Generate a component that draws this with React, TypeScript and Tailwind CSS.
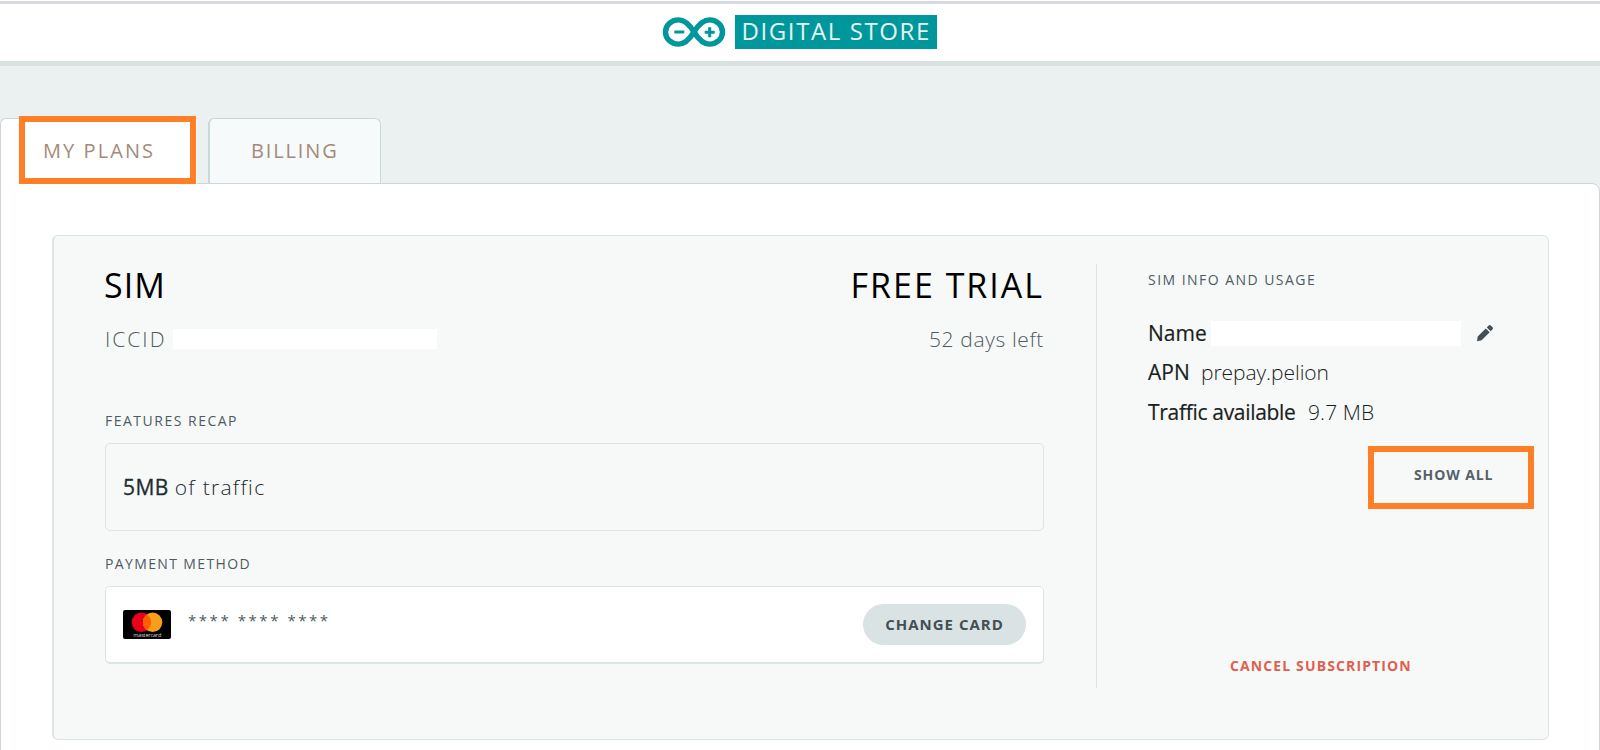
import type { ReactNode } from 'react';

function Logo() {
  return (
    <svg width="64" height="32" viewBox="0 0 64 32" className="shrink-0">
      <g fill="none" stroke="#00979c">
        <path
          strokeWidth="5.400"
          d="M32 16C28 9.500 23.500 3.900 16.500 3.900C9 3.900 3.500 9.300 3.500 16S9 28.100 16.500 28.100C23.500 28.100 28 22.500 32 16C36 9.500 40.500 3.900 47.500 3.900C55 3.900 60.500 9.300 60.500 16S55 28.100 47.500 28.100C40.500 28.100 36 22.500 32 16Z"
        />
        <path strokeWidth="3" d="M12.300 16H22.300M42.700 16.300H52.700M47.700 11.300V21.300" />
      </g>
    </svg>
  );
}

function Mastercard() {
  return (
    <svg width="48" height="29" viewBox="0 0 48 29" className="shrink-0">
      <rect width="48" height="29" rx="2" fill="#000" />
      <circle cx="18.400" cy="12.300" r="9.700" fill="#eb001b" />
      <circle cx="29.600" cy="12.300" r="9.700" fill="#f79e1b" />
      <path d="M24 4.400a9.700 9.700 0 0 1 0 15.800a9.700 9.700 0 0 1 0-15.800Z" fill="#ff5f00" />
      <text x="24.300" y="26.900" textAnchor="middle" fontSize="5.500" textLength="28" fill="#d5d5d5" fontFamily="Open Sans, sans-serif">
        mastercard
      </text>
    </svg>
  );
}

function Pencil() {
  return (
    <svg width="18" height="18" viewBox="0 0 18 18" className="mt-[-2px] ml-[15px] shrink-0">
      <path
        fill="#434f54"
        d="M1 17.200L1.700 12.600L9.800 4.400L13.700 8.300L5.600 16.300ZM10.800 3.400L12.700 1.400Q13.700 0.500 14.800 1.500L16.600 3.300Q17.500 4.300 16.600 5.300L14.700 7.300Z"
      />
    </svg>
  );
}

function Label({ children }: { children: ReactNode }) {
  return <h3 className="h-5 text-[14px] leading-5 text-[#4e5b61]">{children}</h3>;
}

export default function App() {
  return (
    <div className="flex h-[750px] w-[1600px] flex-col overflow-hidden bg-[#ebf1f1] font-['Open_Sans',sans-serif] whitespace-nowrap">
      <header className="h-[66px] shrink-0 border-b-[5px] border-[#d9e1df] bg-white pt-px">
        <div className="flex h-[60px] w-full justify-center border-t-[3px] border-[#d8dae2] pt-[11px] pr-[2px]">
          <div className="flex pt-[1px]">
            <Logo />
          </div>
          <div className="ml-[9px] h-[34px] w-[202px] bg-[#00979c] pl-[7px] text-[24px] leading-[31px] tracking-[1.600px] text-[#e4f4f4]">
            DIGITAL STORE
          </div>
        </div>
      </header>

      <nav className="flex h-[118px] shrink-0 items-end">
        <div className="z-10 h-[66px] w-[197px] shrink-0 rounded-tl-md border-t border-l border-[#ccd7d7] bg-white pl-[18px]">
          <div className="-mt-[3px] h-[68px] w-[177px] border-[6px] border-[#ff7f27] bg-white pl-[18px] text-[20px] leading-[57px] tracking-[2.080px] text-[#a6897b]">
            MY PLANS
          </div>
        </div>
        <div className="ml-[11px] h-[66px] w-[173px] rounded-t-md border border-b-0 border-l-2 border-[#ccd7d7] bg-[#f7fafa] pl-[41px] text-[20px] leading-[63px] tracking-[1.850px] text-[#a6897b]">
          BILLING
        </div>
      </nav>

      <main className="-mt-px h-[580px] shrink-0 rounded-tr-lg border border-[#ccd7d7] bg-white pt-[51px] pl-[51px]">
        <section className="flex h-[505px] w-[1497px] rounded-md border border-l-2 border-[#dbe5e4] bg-[#f7f9f9]">
          <div className="w-[1042px] shrink-0 pt-[29px] pl-[51px]">
            <div className="flex h-10 w-[939px] justify-between text-[34px] leading-10 text-black">
              <h1 className="-ml-px tracking-[1.100px]">SIM</h1>
              <h2 className="tracking-[1.980px]">FREE TRIAL</h2>
            </div>
            <div className="mt-[18px] flex h-8 w-[939px] items-center justify-between text-[21px] leading-8 font-light text-[#4e5b61]">
              <div className="flex items-center">
                <span className="w-[68px] tracking-[2.000px]">ICCID</span>
                <span className="-mt-px h-5 w-[264px] bg-white" />
              </div>
              <span className="tracking-[0.620px]">52 days left</span>
            </div>
            <div className="mt-[56px] tracking-[1.500px]">
              <Label>FEATURES RECAP</Label>
            </div>
            <div className="mt-[12px] h-[88px] w-[939px] rounded-[5px] border border-[#dbe5e4] pl-[17px] text-[21px] leading-[86px] text-[#222b2e]">
              <span className="tracking-[0.400px] [-webkit-text-stroke:0.300px]">5MB</span>
              <span className="ml-[6px] font-light tracking-[1.300px]">of traffic</span>
            </div>
            <div className="mt-[23px] tracking-[1.370px]">
              <Label>PAYMENT METHOD</Label>
            </div>
            <div className="mt-[12px] flex h-[78px] w-[939px] items-center rounded-[5px] border border-b-2 border-[#dbe5e4] bg-white pl-[17px]">
              <Mastercard />
              <span className="mt-[-10px] ml-[17px] text-[15px] leading-6 tracking-[2.550px] text-[#4e5b61]">**** **** ****</span>
              <button className="mr-[17px] ml-auto h-[41px] w-[163px] rounded-full bg-[#dae3e3] pb-px text-[15px] font-bold tracking-[1.000px] text-[#434f54]">
                CHANGE CARD
              </button>
            </div>
          </div>

          <aside className="mt-[28px] h-[424px] w-[452px] border-l border-[#dbe5e4] pl-[51px]">
            <div className="mt-[6px] tracking-[1.460px]">
              <Label>SIM INFO AND USAGE</Label>
            </div>
            <dl className="mt-[24px] text-[21px] leading-[39px] text-[#1a1f21] [&_dt]:[-webkit-text-stroke:0.200px]">
              <div className="flex h-[39px] items-center">
                <dt className="w-[63px]">Name</dt>
                <dd className="-mt-px h-[25px] w-[250px] bg-white" />
                <Pencil />
              </div>
              <div className="flex h-[39px]">
                <dt className="w-[53px]">APN</dt>
                <dd className="font-light tracking-[-0.060px]">prepay.pelion</dd>
              </div>
              <div className="flex h-[40px] pt-px">
                <dt className="w-[160px] tracking-[-0.310px]">Traffic available</dt>
                <dd className="font-light tracking-[0.100px]">9.7 MB</dd>
              </div>
            </dl>
            <div className="mt-[14px] ml-[220px] h-[63px] w-[166px] border-[6px] border-[#ff7f27] pl-[40px] text-[14px] leading-[46px] font-bold tracking-[0.880px] text-[#566167]">
              SHOW ALL
            </div>
            <div className="mt-[147px] ml-[82px] text-[14px] leading-5 font-bold tracking-[1.120px] text-[#e0604f]">
              CANCEL SUBSCRIPTION
            </div>
          </aside>
        </section>
      </main>
    </div>
  );
}
